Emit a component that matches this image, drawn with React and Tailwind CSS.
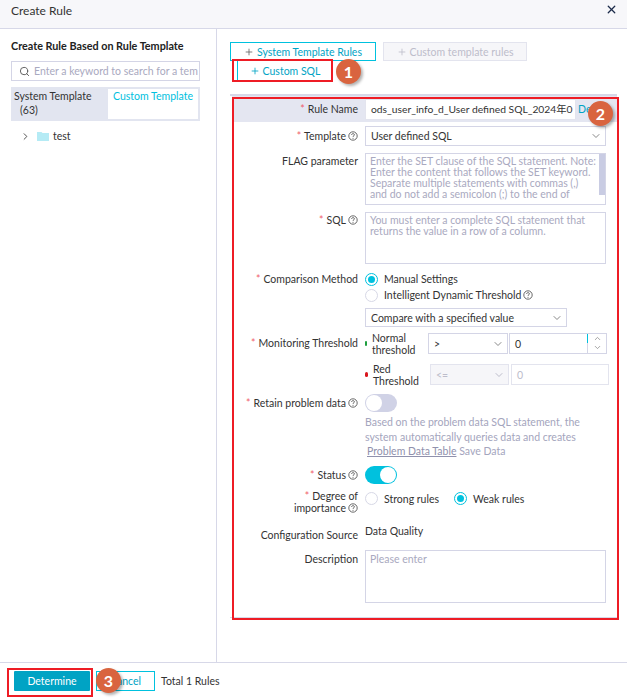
import React from "react";
import { ChevronDown, ChevronUp, ChevronRight, Search, X, Plus } from "lucide-react";

const Help = () => (
  <svg width="10" height="10" viewBox="0 0 10 10" className="inline-block shrink-0 ml-[2px] align-[-1px]">
    <circle cx="5" cy="5" r="4.2" fill="none" stroke="#444" strokeWidth="0.8" />
    <path d="M3.6 4c0-1.8 2.8-1.8 2.8-.2 0 1-1.4 1-1.4 2.1" fill="none" stroke="#444" strokeWidth="0.8" />
    <circle cx="5" cy="7.3" r="0.5" fill="#444" />
  </svg>
);

const Star = () => <span className="text-[#f0616d] mr-[3px]">*</span>;

const Row = ({ label, required, help, className = "", labelClass = "", children }) => (
  <div className={`flex ${className}`}>
    <div className={`w-[133px] shrink-0 text-right text-[#333] pr-[7px] ${labelClass}`}>
      {required && <Star />}
      {label}
      {help && <Help />}
    </div>
    <div className="flex-1 min-w-0">{children}</div>
  </div>
);

const Radio = ({ checked }) => (
  <span
    className={`w-[13px] h-[13px] rounded-full border flex items-center justify-center bg-white shrink-0 ${
      checked ? "border-[#00c1de]" : "border-[#d7d8e6]"
    }`}
  >
    {checked && <span className="w-[7px] h-[7px] rounded-full bg-[#00c1de]" />}
  </span>
);

const Badge = ({ n, className }) => (
  <div
    className={`absolute w-[25px] h-[25px] rounded-full bg-[#d9643f] text-white font-bold text-[16px] flex items-center justify-center shadow-[2px_2px_3px_rgba(0,0,0,0.3)] ${className}`}
  >
    {n}
  </div>
);

const App = () => {
  return (
    <div className="relative w-[627px] h-[698px] bg-white overflow-hidden text-[10.5px] leading-[14px] text-[#333] font-['Lato',sans-serif]">
      {/* header */}
      <div className="h-[29px] bg-[#f7f7fa] border-b border-[#d7d8e8] flex items-center justify-between pl-[11px] pr-[9px]">
        <span className="text-[12px] -mt-[7px]">Create Rule</span>
        <X size={13} strokeWidth={2.4} className="text-[#1c2b4a] -mt-[9px]" />
      </div>

      <div className="flex h-[633px]">
        {/* left panel */}
        <div className="w-[217px] shrink-0 border-r border-[#d7d8e8] pl-[11px] pt-[10px]">
          <div className="font-bold text-[10.8px] text-[#222] h-[14px]">Create Rule Based on Rule Template</div>
          <div className="mt-[8px] w-[189px] h-[20px] border border-[#d4d5e6] flex items-center pl-[7px] overflow-hidden">
            <Search size={11} className="text-[#555] shrink-0" />
            <span className="ml-[4px] text-[#a9a9c0] whitespace-nowrap">Enter a keyword to search for a tem</span>
          </div>
          <div className="mt-[6px] w-[189px] h-[34px] bg-[#e2e5f0] flex p-[2px]">
            <div className="w-[95px] pl-[1px] leading-[14px]">
              System Template
              <div className="pl-[6px]">(63)</div>
            </div>
            <div className="w-[90px] bg-white text-[#00c1de] text-center">Custom Template</div>
          </div>
          <div className="mt-[8px] flex items-center h-[14px] pl-[9px]">
            <ChevronRight size={11} className="text-[#444]" />
            <svg width="12" height="10" viewBox="0 0 12 10" className="ml-[6px]">
              <path d="M0 1h4.5l1 1H12v8H0z" fill="#b5ebf5" />
            </svg>
            <span className="ml-[4px]">test</span>
          </div>
        </div>

        {/* right panel */}
        <div className="flex-1 min-w-0 pl-[13px] pt-[13px]">
          <div className="flex gap-[7px]">
            <button className="w-[146px] h-[19px] border border-[#00c1de] text-[#00a3c4] flex items-center justify-center gap-[3px]">
              <Plus size={10} className="text-[#666]" />
              System Template Rules
            </button>
            <button className="w-[144px] h-[19px] border border-[#e3e4ee] bg-[#f6f6f9] text-[#bdbdcb] flex items-center justify-center gap-[3px]">
              <Plus size={10} />
              Custom template rules
            </button>
          </div>
          <button className="ml-[7px] w-[95px] h-[20px] border-l border-b border-[#00c1de] text-[#00a3c4] flex items-center justify-center gap-[3px]">
            <Plus size={10} />
            Custom SQL
          </button>

          {/* form */}
          <div className="mt-[13px] w-[387px] border-t-2 border-b border-[#d7d8e8] h-[524px] pl-[2px]">
            <Row label="Rule Name" required className="h-[26px] bg-[#e4e6f1] items-center">
              <div className="flex items-center">
                <div className="w-[211px] h-[21px] bg-white border border-[#e3e4ee] pl-[5px] leading-[19px] text-[10.3px] text-[#333] whitespace-nowrap overflow-hidden font-['Lato','Noto_Sans_CJK_SC',sans-serif]">
                  ods_user_info_d_User defined SQL_2024年0
                </div>
                <span className="ml-[2px] text-[#00a3c4]">Del</span>
              </div>
            </Row>

            <Row label="Template" required help className="mt-[4px] h-[20px] items-center">
              <div className="w-[241px] h-[20px] border border-[#d4d5e6] pl-[5px] pr-[3px] flex items-center justify-between">
                User defined SQL
                <ChevronDown size={12} className="text-[#888]" />
              </div>
            </Row>

            <Row label="FLAG parameter" className="mt-[7px]" labelClass="pt-[1px]">
              <div className="relative w-[241px] h-[52px] border border-[#d4d5e6] pl-[4px] pt-[2px] text-[#a9a9c0] leading-[11px] overflow-hidden whitespace-nowrap">
                Enter the SET clause of the SQL statement. Note:
                <br />
                Enter the content that follows the SET keyword.
                <br />
                Separate multiple statements with commas (,)
                <br />
                and do not add a semicolon (;) to the end of
                <div className="absolute right-0 top-0 w-[6px] h-[41px] bg-[#c9cce3]" />
              </div>
            </Row>

            <Row label="SQL" required help className="mt-[7px]" labelClass="pt-[1px]">
              <div className="w-[241px] h-[52px] border border-[#d4d5e6] pl-[4px] pr-[8px] pt-[2px] text-[#a9a9c0] leading-[11px]">
                You must enter a complete SQL statement that returns the value in a row of a column.
              </div>
            </Row>

            <Row label="Comparison Method" required className="mt-[7px]" labelClass="pt-[1px]">
              <div className="flex items-center gap-[6px] h-[16px]">
                <Radio checked />
                Manual Settings
              </div>
              <div className="flex items-center gap-[6px] h-[16px]">
                <Radio />
                <span className="flex items-center">Intelligent Dynamic Threshold<Help /></span>
              </div>
            </Row>

            <Row className="mt-[5px]">
              <div className="w-[202px] h-[19px] border border-[#d4d5e6] pl-[5px] pr-[3px] flex items-center justify-between">
                Compare with a specified value
                <ChevronDown size={12} className="text-[#888]" />
              </div>
            </Row>

            <Row label="Monitoring Threshold" required className="mt-[6px]" labelClass="pt-[3px]">
              <div className="flex items-center h-[21px]">
                <span className="w-[2px] h-[5px] bg-[#1e9e3e] rounded-full" />
                <div className="w-[56px] ml-[5px] leading-[12px]">Normal threshold</div>
                <div className="w-[80px] h-[21px] border border-[#d4d5e6] pl-[5px] pr-[3px] flex items-center justify-between">
                  &gt;
                  <ChevronDown size={12} className="text-[#888]" />
                </div>
                <div className="ml-[1px] w-[98px] h-[21px] border border-[#d4d5e6] pl-[5px] flex items-center justify-between">
                  0
                  <div className="w-[19px] h-full border-l border-[#d4d5e6] flex flex-col items-center relative">
                    <span className="absolute -left-px top-0 h-[9px] w-px bg-[#00c1de]" />
                    <ChevronUp size={9} className="text-[#888]" />
                    <ChevronDown size={9} className="text-[#888]" />
                  </div>
                </div>
              </div>
              <div className="flex items-center h-[21px] mt-[10px]">
                <span className="w-[3px] h-[5px] bg-[#d9161e] rounded-full" />
                <div className="w-[57px] ml-[5px] leading-[12px]">Red Threshold</div>
                <div className="w-[79px] h-[21px] border border-[#e3e4ee] bg-[#f6f6f9] pl-[5px] pr-[3px] flex items-center justify-between text-[#bdbdcb]">
                  &lt;=
                  <ChevronDown size={12} />
                </div>
                <div className="ml-[2px] w-[98px] h-[21px] border border-[#e3e4ee] pl-[5px] flex items-center text-[#bdbdcb]">0</div>
              </div>
            </Row>

            <Row label="Retain problem data" required help className="mt-[9px]" labelClass="pt-[2px]">
              <div className="w-[32px] h-[18px] rounded-full bg-[#d0d2e6] p-[1px]">
                <div className="w-[16px] h-[16px] rounded-full bg-white" />
              </div>
              <div className="mt-[3px] w-[240px] text-[#a4a5bd] leading-[14.5px]">
                Based on the problem data SQL statement, the system automatically queries data and creates
                <div className="pl-[2px]">
                  <span className="underline text-[#9091ad]">Problem Data Table</span> Save Data
                </div>
              </div>
            </Row>

            <Row label="Status" required help className="mt-[7px]" labelClass="pt-[2px]">
              <div className="w-[32px] h-[18px] rounded-full bg-[#00c1de] p-[1px] flex justify-end">
                <div className="w-[16px] h-[16px] rounded-full bg-white" />
              </div>
            </Row>

            <Row
              label="Degree of importance"
              required
              help
              className="mt-[6px]"
              labelClass="leading-[12px] pl-[58px]"
            >
              <div className="flex items-center h-[18px]">
                <Radio />
                <span className="ml-[6px]">Strong rules</span>
                <span className="ml-[15px]"><Radio checked /></span>
                <span className="ml-[6px]">Weak rules</span>
              </div>
            </Row>

            <Row label="Configuration Source" className="mt-[10px]" labelClass="pt-[4px]">
              Data Quality
            </Row>

            <Row label="Description" className="mt-[8px]" labelClass="pt-[2px]">
              <div className="w-[241px] h-[53px] border border-[#d4d5e6] pl-[4px] pt-[1px] text-[#a9a9c0]">Please enter</div>
            </Row>
          </div>
        </div>
      </div>

      {/* footer */}
      <div className="h-[36px] border-t border-[#d7d8e8] flex items-center pl-[14px]">
        <button className="w-[76px] h-[20px] bg-[#00a3c4] text-white rounded-[1px]">Determine</button>
        <button className="ml-[6px] w-[59px] h-[20px] border border-[#00c1de] text-[#00a3c4]">Cancel</button>
        <span className="ml-[6px]">Total 1 Rules</span>
      </div>

      {/* annotations */}
      <div className="absolute left-[232px] top-[59px] w-[101px] h-[23px] border-2 border-[#ee1c25]" />
      <div className="absolute left-[232px] top-[97px] w-[387px] h-[523px] border-2 border-[#ee1c25]" />
      <div className="absolute left-[7px] top-[668px] w-[86px] h-[29px] border-2 border-[#ee1c25]" />
      <Badge n="1" className="left-[336px] top-[59px]" />
      <Badge n="2" className="left-[588px] top-[101px]" />
      <Badge n="3" className="left-[96px] top-[668px]" />
    </div>
  );
};

export default App;
